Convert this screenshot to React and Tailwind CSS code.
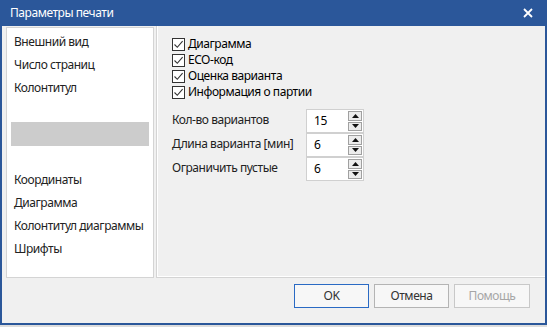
import React from "react";

const font = { fontFamily: '"Segoe UI", "Noto Sans", "Open Sans", sans-serif', letterSpacing: "-0.45px" };

function Check({ label }) {
  return (
    <div className="flex items-center h-[16px]">
      <div className="w-[13px] h-[13px] border border-[#333] bg-white flex items-center justify-center">
        <svg width="11" height="11" viewBox="0 0 11 11">
          <path d="M1.5 5.5 L4.3 8.3 L9.6 2.2" fill="none" stroke="#333" strokeWidth="1.1" />
        </svg>
      </div>
      <span className="ml-[3px] text-[12px] text-black leading-[16px]">{label}</span>
    </div>
  );
}

function Spin({ label, value }) {
  return (
    <div className="flex items-center h-[24px]">
      <span className="w-[134px] text-[12px] text-[#222] leading-[16px] -mt-[3px]">{label}</span>
      <div className="flex w-[58px] h-[24px] bg-white border border-[#d0d0d0]">
        <div className="flex-1 flex items-center pl-[7px] text-[12px] text-black">{value}</div>
        <div className="flex flex-col w-[15px] py-[1px] pr-[1px] gap-[1px]">
          <div className="flex-1 border border-[#a0a0a0] bg-[#ececec] flex items-center justify-center">
            <svg width="7" height="4" viewBox="0 0 7 4"><path d="M0 4 L3.5 0 L7 4 Z" fill="#111" /></svg>
          </div>
          <div className="flex-1 border border-[#a0a0a0] bg-[#ececec] flex items-center justify-center">
            <svg width="7" height="4" viewBox="0 0 7 4"><path d="M0 0 L3.5 4 L7 0 Z" fill="#111" /></svg>
          </div>
        </div>
      </div>
    </div>
  );
}

function Item({ children }) {
  return <div className="h-[23px] flex items-center pl-[7px] text-[12px] text-[#222]">{children}</div>;
}

export default function App() {
  return (
    <div className="w-[547px] h-[327px] bg-[#cfcfcf] flex flex-col overflow-hidden" style={font}>
      <div className="w-[547px] h-[325px] flex flex-col border-x-2 border-b-2 border-[#2b579a] bg-[#f0f0f0]">
        <div className="h-[26px] bg-[#2b579a] flex items-center justify-between -mx-[2px] pl-[10px] pr-[14px]">
          <span className="text-white text-[12px]">Параметры печати</span>
          <svg width="10" height="10" viewBox="0 0 10 10">
            <path d="M1 1 L9 9 M9 1 L1 9" stroke="#fff" strokeWidth="1.8" />
          </svg>
        </div>
        <div className="flex h-[252px]">
          <div className="mt-[1px] ml-[4px] w-[148px] bg-white border border-[#d4d4d4] pt-[2px]">
            <Item>Внешний вид</Item>
            <Item>Число страниц</Item>
            <Item>Колонтитул</Item>
            <Item></Item>
            <div className="h-[23px] px-[4px]">
              <div className="h-[24px] bg-[#cccccc]" />
            </div>
            <Item></Item>
            <Item>Координаты</Item>
            <Item>Диаграмма</Item>
            <Item>Колонтитул диаграммы</Item>
            <Item>Шрифты</Item>
          </div>
          <div className="ml-[2px] flex-1 border-l border-b border-[#d4d4d4]">
            <div className="h-full border-l border-b border-white pl-[14px] pt-[10px]">
              <Check label="Диаграмма" />
              <Check label="ECO-код" />
              <Check label="Оценка варианта" />
              <Check label="Информация о партии" />
              <div className="h-[9px]" />
              <Spin label="Кол-во вариантов" value="15" />
              <Spin label="Длина варианта [мин]" value="6" />
              <Spin label="Ограничить пустые" value="6" />
            </div>
          </div>
        </div>
        <div className="flex justify-end gap-[5px] pt-[6px] pr-[15px]">
          <button className="w-[75px] h-[24px] border border-[#2a6ac4] bg-[#f7f7f7] text-[12px] text-[#333]">OK</button>
          <button className="w-[75px] h-[24px] border border-[#b4b4b4] bg-[#f7f7f7] text-[12px] text-[#333]">Отмена</button>
          <button className="w-[76px] h-[24px] border border-[#c8c8c8] bg-[#f7f7f7] text-[12px] text-[#a6a6a6]">Помощь</button>
        </div>
      </div>
      <div className="flex-1 bg-[#ddd]" />
    </div>
  );
}
